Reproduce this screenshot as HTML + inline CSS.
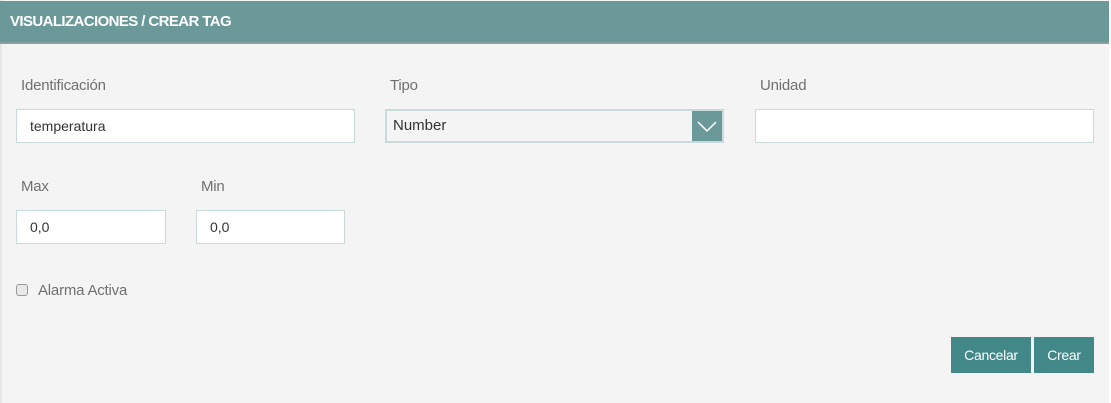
<!DOCTYPE html>
<html><head><meta charset="utf-8"><style>
*{box-sizing:border-box;margin:0;padding:0}
body{width:1111px;height:403px;background:#fff;font-family:"Liberation Sans Narrow","Liberation Sans",sans-serif;position:relative;overflow:hidden}
.panel{position:absolute;left:0;top:0;width:1109px;height:403px;background:#f4f4f4;border-left:2px solid #e6e6e6}
.hdr{position:absolute;left:0;top:1px;width:1109px;height:43px;background:#6b9999;border-bottom:2px solid #8a9f9f;color:#fff;font-weight:bold;font-size:15px;padding:12px 0 0 10px;letter-spacing:-0.6px}
.lbl{position:absolute;font-size:15px;color:#707070;letter-spacing:-0.2px}
.inp{position:absolute;height:34px;background:#fff;border:1px solid #c8dada;font-size:14px;color:#333;padding:8px 0 0 13px}
.sel{background:#f4f4f4;border:2px solid #c8dada;padding:6px 0 0 6px;font-size:15px}
.arrow{position:absolute;right:0;top:0;width:30px;height:30px;background:#6b9999}
.btn{position:absolute;top:337px;height:36px;background:#428888;color:#fff;font-size:14px;text-align:center;line-height:36px;letter-spacing:-0.3px}
.cb{position:absolute;left:16px;top:284px;width:12px;height:12px;border:1px solid #9a9a9a;border-radius:3px;background:#e8e8e8}
</style></head><body>
<div class="panel"></div>
<div class="hdr">VISUALIZACIONES / CREAR TAG</div>
<div class="lbl" style="left:21px;top:77px">Identificación</div>
<div class="lbl" style="left:390px;top:77px">Tipo</div>
<div class="lbl" style="left:760px;top:77px">Unidad</div>
<div class="inp" style="left:16px;top:109px;width:339px">temperatura</div>
<div class="inp sel" style="left:385px;top:109px;width:339px">Number<div class="arrow"><svg width="30" height="30"><path d="M6 11 L15 20 L24 11" stroke="#fff" stroke-width="1.5" fill="none"/></svg></div></div>
<div class="inp" style="left:755px;top:109px;width:339px"></div>
<div class="lbl" style="left:21px;top:178px">Max</div>
<div class="lbl" style="left:201px;top:178px">Min</div>
<div class="inp" style="left:16px;top:210px;width:150px">0,0</div>
<div class="inp" style="left:196px;top:210px;width:149px">0,0</div>
<div class="cb"></div>
<div class="lbl" style="left:38px;top:282px">Alarma Activa</div>
<div class="btn" style="left:951px;width:80px">Cancelar</div>
<div class="btn" style="left:1034px;width:60px">Crear</div>
</body></html>
